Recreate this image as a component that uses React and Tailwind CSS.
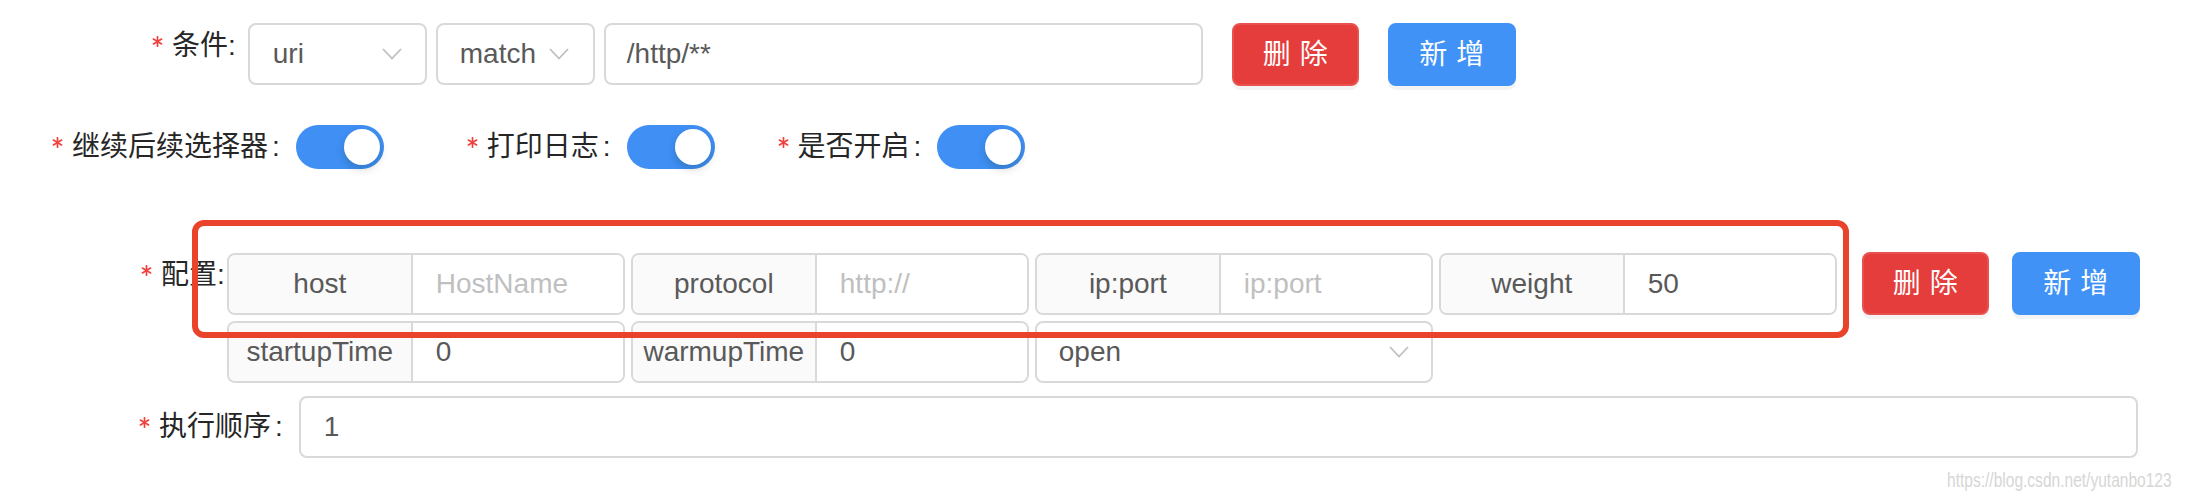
import React from "react";

function Req() {
  return (
    <span className="inline-block w-[14px] mr-[8px] self-start pt-[10px] shrink-0">
      <svg width="11" height="11" viewBox="0 0 11 11" className="ml-[2px] block">
        <g stroke="#f0403c" strokeWidth="1.7" strokeLinecap="round">
          <line x1="5.5" y1="0.8" x2="5.5" y2="10.2" />
          <line x1="1.4" y1="3.1" x2="9.6" y2="7.9" />
          <line x1="9.6" y1="3.1" x2="1.4" y2="7.9" />
        </g>
      </svg>
    </span>
  );
}

function Label({ text, colon = "antd" }) {
  return (
    <div className="flex shrink-0">
      <Req />
      <span className="leading-[40px] text-[28px] text-[#262626] whitespace-nowrap">
        {text}
        {colon === "plain" ? ":" : null}
      </span>
      {colon === "antd" ? (
        <span className="leading-[40px] text-[28px] text-[#262626] ml-[4px] mr-[16px]">:</span>
      ) : null}
    </div>
  );
}

function Chevron() {
  return (
    <svg width="20" height="12" viewBox="0 0 20 12" fill="none" className="shrink-0">
      <path d="M1 1L10 10.5L19 1" stroke="#bfbfbf" strokeWidth="1.8" />
    </svg>
  );
}

function Select({ w, value, pl, pr, justify = "justify-between" }) {
  return (
    <div
      className={`flex items-center ${justify} h-[62px] border-2 border-[#d9d9d9] rounded-[8px] bg-white ${w} ${pl} ${pr} shrink-0`}
    >
      <span className="text-[28px] text-[#595959]">{value}</span>
      <Chevron />
    </div>
  );
}

function Switch() {
  return (
    <div className="w-[88px] h-[44px] rounded-full bg-[#3f8ff4] flex items-center justify-end pr-[4px] shrink-0">
      <div className="w-[36px] h-[36px] rounded-full bg-white shadow-[0_4px_8px_rgba(0,35,11,0.2)]" />
    </div>
  );
}

function Group({ addon, value, placeholder }) {
  return (
    <div className="flex w-[398px] h-[62px] border-2 border-[#d9d9d9] rounded-[8px] overflow-hidden shrink-0">
      <div className="w-[184px] shrink-0 bg-[#fafafa] border-r-2 border-[#d9d9d9] flex items-center justify-center overflow-hidden whitespace-nowrap">
        <span className="text-[28px] text-[#595959]">{addon}</span>
      </div>
      <div className="flex-1 flex items-center pl-[23px] bg-white">
        {value ? (
          <span className="text-[28px] text-[#595959]">{value}</span>
        ) : (
          <span className="text-[28px] text-[#bfbfbf]">{placeholder}</span>
        )}
      </div>
    </div>
  );
}

function Btn({ kind, text }) {
  const cls =
    kind === "danger"
      ? "bg-[#e43d3c] border-[#e9514f]"
      : "bg-[#4092f6] border-[#4092f6]";
  return (
    <div
      className={`flex items-center justify-center h-[63px] rounded-[8px] border-2 ${cls} shadow-[0_4px_0_rgba(0,0,0,0.045)] shrink-0`}
    >
      <span className="text-[28px] text-white tracking-[9px] mr-[-9px]">{text}</span>
    </div>
  );
}

export default function App() {
  return (
    <div className="relative w-[2186px] h-[500px] bg-white overflow-hidden font-['Liberation_Sans','Noto_Sans_CJK_SC',sans-serif]">
      <div className="flex flex-col pt-[23px]">
        {/* Row 1: 条件 */}
        <div className="flex items-start pl-[150px]">
          <div className="mt-[3px] mr-[12px]">
            <Label text="条件" colon="plain" />
          </div>
          <Select w="w-[179px]" value="uri" pl="pl-[23px]" pr="pr-[23px]" />
          <div className="ml-[9px]">
            <Select w="w-[159px]" value="match" pl="pl-[22px]" pr="pr-[24px]" />
          </div>
          <div className="ml-[9px] w-[599px] h-[62px] border-2 border-[#d9d9d9] rounded-[8px] flex items-center pl-[21px]">
            <span className="text-[28px] text-[#595959]">/http/**</span>
          </div>
          <div className="ml-[29px] w-[127px]">
            <Btn kind="danger" text="删除" />
          </div>
          <div className="ml-[29px] w-[128px]">
            <Btn kind="primary" text="新增" />
          </div>
        </div>

        {/* Row 2: switches */}
        <div className="flex items-center mt-[39px] pl-[50px] h-[44px]">
          <Label text="继续后续选择器" />
          <Switch />
          <div className="ml-[81px] flex items-center">
            <Label text="打印日志" />
            <Switch />
          </div>
          <div className="ml-[61px] flex items-center">
            <Label text="是否开启" />
            <Switch />
          </div>
        </div>

        {/* Row 3: 配置 */}
        <div className="flex items-start mt-[83px] pl-[139px]">
          <div className="mt-[3px] mr-[2px]">
            <Label text="配置" colon="plain" />
          </div>
          <div className="flex flex-col gap-[6px]">
            <div className="flex items-center">
              <div className="flex gap-[6px]">
                <Group addon="host" placeholder="HostName" />
                <Group addon="protocol" placeholder="http://" />
                <Group addon="ip:port" placeholder="ip:port" />
                <Group addon="weight" value="50" />
              </div>
              <div className="ml-[25px] w-[127px]">
                <Btn kind="danger" text="删除" />
              </div>
              <div className="ml-[23px] w-[128px]">
                <Btn kind="primary" text="新增" />
              </div>
            </div>
            <div className="flex gap-[6px]">
              <Group addon="startupTime" value="0" />
              <Group addon="warmupTime" value="0" />
              <Select w="w-[398px]" value="open" pl="pl-[22px]" pr="pr-[22px]" />
            </div>
          </div>
        </div>

        {/* Row 5: 执行顺序 */}
        <div className="flex items-center mt-[13px] pl-[137px]">
          <Label text="执行顺序" />
          <div className="w-[1839px] h-[62px] border-2 border-[#d9d9d9] rounded-[8px] flex items-center pl-[23px]">
            <span className="text-[28px] text-[#595959]">1</span>
          </div>
        </div>
      </div>

      {/* annotation box */}
      <div className="absolute left-[192px] top-[220px] w-[1657px] h-[118px] border-[6px] border-[#e9432c] rounded-[12px] pointer-events-none" />

      {/* watermark */}
      <div className="absolute left-[1947px] top-[464px] w-[230px] overflow-visible">
        <div className="text-[21px] text-[#d6d6d6] whitespace-nowrap origin-left scale-x-[0.74] w-max">
          https://blog.csdn.net/yutanbo123
        </div>
      </div>
    </div>
  );
}
